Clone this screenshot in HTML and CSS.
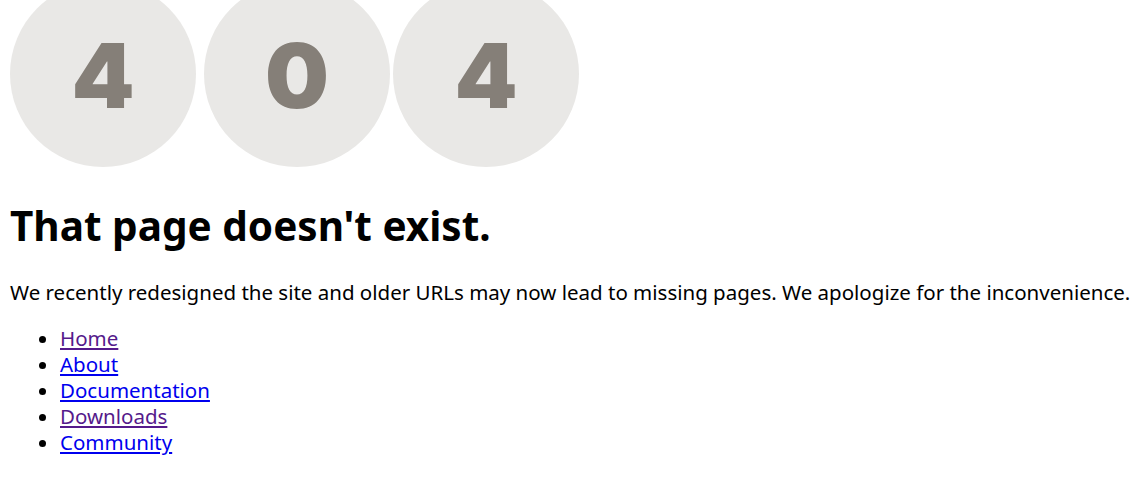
FILE: index.html
```html
<!DOCTYPE html>
<html lang="en">
<head>
<meta charset="utf-8">
<title>404 - Page not found</title>
<link rel="stylesheet" href="styles.css">
</head>
<body>
<div class="hero">
  <div class="circle c1"><span class="digit">4</span></div>
  <div class="circle c2"><span class="digit">0</span></div>
  <div class="circle c3"><span class="digit">4</span></div>
</div>
<h1 class="title">That page doesn't exist.</h1>
<p class="lead">We recently redesigned the site and older URLs may now lead to missing pages. We apologize for the inconvenience.</p>
<ul class="links">
  <li><a class="visited" href="#home">Home</a></li>
  <li><a href="#about">About</a></li>
  <li><a href="#docs">Documentation</a></li>
  <li><a class="visited" href="#downloads">Downloads</a></li>
  <li><a href="#community">Community</a></li>
</ul>
</body>
</html>
```
FILE: styles.css
```css
html, body {
  background: #ffffff;
}
body {
  margin: 0 0 0 10px;
  font-family: "Noto Sans", "Open Sans", sans-serif;
  color: #000;
}
.hero {
  height: 167px;
  display: flex;
  align-items: flex-end;
  overflow: hidden;
}
.circle {
  width: 186px;
  height: 186px;
  border-radius: 50%;
  background: #e9e8e6;
  flex: none;
  display: flex;
  align-items: center;
  justify-content: center;
}
.c2 { margin-left: 8px; }
.c3 { margin-left: 3px; }
.digit {
  font-family: Inter, sans-serif;
  font-weight: 900;
  font-size: 90px;
  line-height: 1;
  color: #857f78;
  padding-top: 4px;
}
.title {
  margin: 34px 0 0;
  font-size: 40.5px;
  line-height: 50px;
  font-weight: 700;
}
.lead {
  margin: 28px 0 0;
  font-size: 20.5px;
  line-height: 26px;
  white-space: nowrap;
}
.links {
  margin: 20px 0 0;
  padding-left: 50px;
  font-size: 20.5px;
  line-height: 26px;
}
.links a { color: #0000ee; }
.links a.visited { color: #551a8b; }
```
